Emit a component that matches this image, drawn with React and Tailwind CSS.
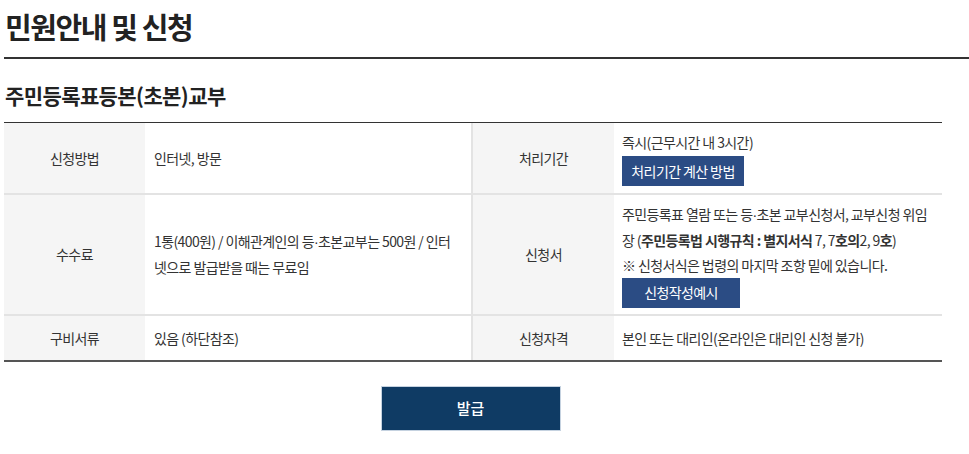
import React from "react";

const Dot = () => <span className="font-['Liberation_Sans',sans-serif]">·</span>;

const rows = [
  {
    th1: "신청방법",
    td1: <span>인터넷, 방문</span>,
    th2: "처리기간",
    td2: (
      <div>
        <p>즉시(근무시간 내 3시간)</p>
        <button className="mt-[1px] h-[30px] w-[122px] bg-[#2b4c84] text-[14px] text-white">
          처리기간 계산 방법
        </button>
      </div>
    ),
    h: "h-[70px]",
  },
  {
    th1: "수수료",
    td1: (
      <p>
        1통(400원) / 이해관계인의 등<Dot />초본교부는 500원 / 인터
        <br />
        넷으로 발급받을 때는 무료임
      </p>
    ),
    th2: "신청서",
    td2: (
      <div>
        <p>
          주민등록표 열람 또는 등<Dot />초본 교부신청서, 교부신청 위임
        </p>
        <p>
          장 (<b>주민등록법 시행규칙 : 별지서식</b> 7, 7<b>호의</b>2, 9<b>호</b>)
        </p>
        <p>※ 신청서식은 법령의 마지막 조항 밑에 있습니다.</p>
        <button className="h-[30px] w-[118px] bg-[#2b4c84] text-[14px] text-white">
          신청작성예시
        </button>
      </div>
    ),
    h: "h-[121px]",
  },
  {
    th1: "구비서류",
    td1: <span>있음 (하단참조)</span>,
    th2: "신청자격",
    td2: <span>본인 또는 대리인(온라인은 대리인 신청 불가)</span>,
    h: "h-[46px]",
  },
];

export default function App() {
  return (
    <div className="bg-white pl-[4px] text-[#333] font-['Noto_Sans_CJK_KR',sans-serif]">
      {/* page title */}
      <h2 className="pt-[6px] pl-[1px] text-[29px] leading-[40px] font-bold tracking-[-1.4px] text-[#222]">
        민원안내 및 신청
      </h2>
      <div className="mt-[11px] h-[2px] bg-[#333]" />

      <h3 className="mt-[22px] pl-[1px] text-[21px] leading-[28px] font-bold tracking-[-0.6px] text-[#222]">
        주민등록표등본(초본)교부
      </h3>

      {/* info table */}
      <div className="mt-[13px] w-[938px] border-t border-[#333] border-b-2 border-b-[#555] text-[14px] leading-[25px] tracking-[-0.6px]">
        {rows.map((r, i) => (
          <div
            key={r.th1}
            className={`grid grid-cols-[141px_328px_141px_328px] ${r.h} ${
              i > 0 ? "border-t-2 border-[#e3e3e3]" : ""
            }`}
          >
            <div className="flex items-center justify-center bg-[#f5f5f5]">{r.th1}</div>
            <div className="flex items-center pl-[9px] pr-[8px] border-r-2 border-[#e3e3e3]">{r.td1}</div>
            <div className="flex items-center justify-center bg-[#f5f5f5]">{r.th2}</div>
            <div className="flex items-center pl-[8px]">{r.td2}</div>
          </div>
        ))}
      </div>

      <div className="mt-[24px] flex w-[938px] justify-center pr-[5px]">
        <button className="h-[45px] w-[180px] border border-[#c5d2e0] bg-[#0f3b64] text-[15px] font-medium text-white">
          발급
        </button>
      </div>
      <div className="h-[22px]" />
    </div>
  );
}
